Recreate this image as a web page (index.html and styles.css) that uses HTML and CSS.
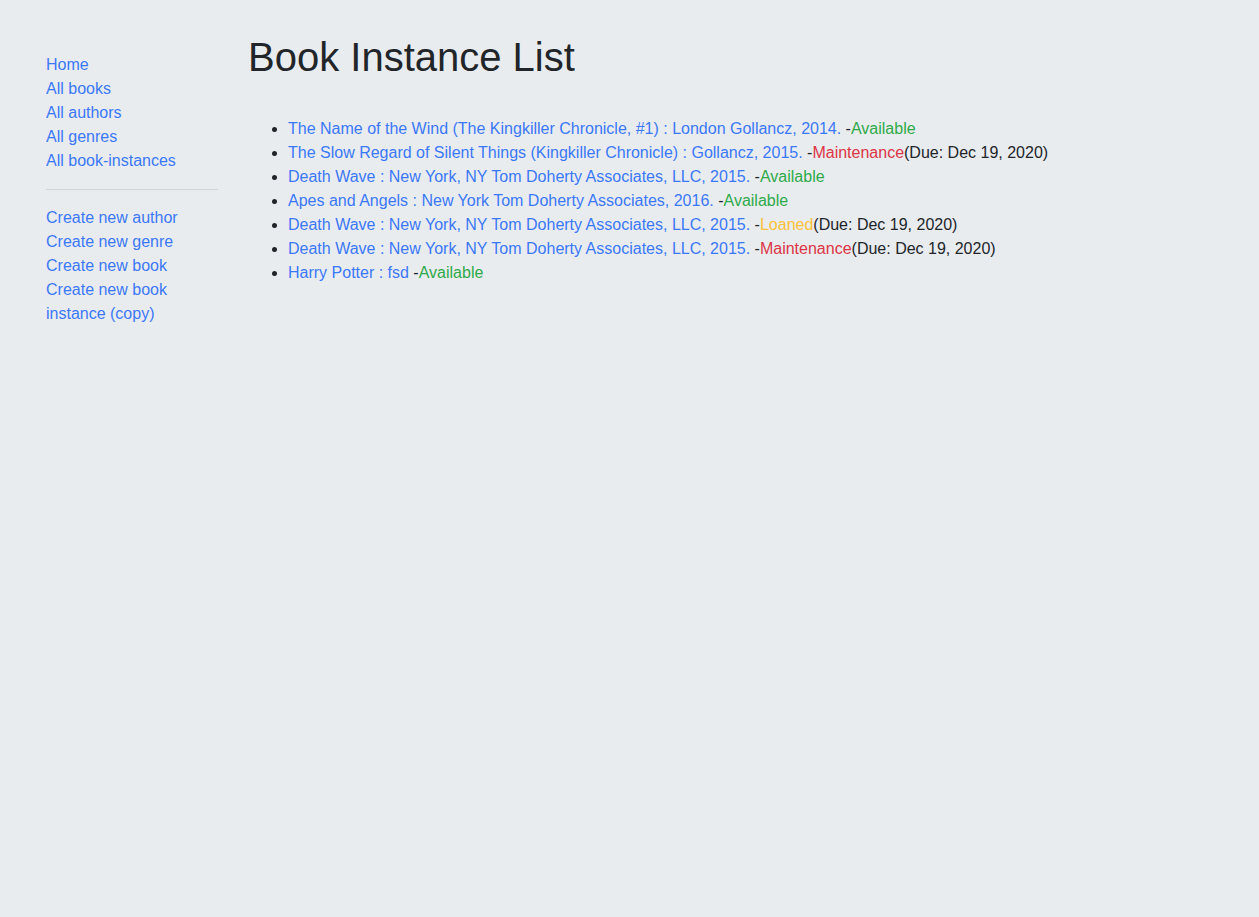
FILE: index.html
```html
<!DOCTYPE html>
<html lang="en">
<head>
<meta charset="utf-8">
<title>Local Library</title>
<link rel="stylesheet" href="styles.css">
</head>
<body>
<div class="page">
  <nav class="sidebar">
    <ul class="sidebar-nav">
      <li><a href="#">Home</a></li>
      <li><a href="#">All books</a></li>
      <li><a href="#">All authors</a></li>
      <li><a href="#">All genres</a></li>
      <li><a href="#">All book-instances</a></li>
      <li><hr class="divider"></li>
      <li><a href="#">Create new author</a></li>
      <li><a href="#">Create new genre</a></li>
      <li><a href="#">Create new book</a></li>
      <li><a href="#">Create new book instance (copy)</a></li>
    </ul>
  </nav>
  <main class="content">
    <h1 class="title">Book Instance List</h1>
    <ul class="instances">
      <li><a href="#">The Name of the Wind (The Kingkiller Chronicle, #1) : London Gollancz, 2014.</a> -<span class="st-available">Available</span></li>
      <li><a href="#">The Slow Regard of Silent Things (Kingkiller Chronicle) : Gollancz, 2015.</a> -<span class="st-maint">Maintenance</span><span class="due">(Due: Dec 19, 2020)</span></li>
      <li><a href="#">Death Wave : New York, NY Tom Doherty Associates, LLC, 2015.</a> -<span class="st-available">Available</span></li>
      <li><a href="#">Apes and Angels : New York Tom Doherty Associates, 2016.</a> -<span class="st-available">Available</span></li>
      <li><a href="#">Death Wave : New York, NY Tom Doherty Associates, LLC, 2015.</a> -<span class="st-loaned">Loaned</span><span class="due">(Due: Dec 19, 2020)</span></li>
      <li><a href="#">Death Wave : New York, NY Tom Doherty Associates, LLC, 2015.</a> -<span class="st-maint">Maintenance</span><span class="due">(Due: Dec 19, 2020)</span></li>
      <li><a href="#">Harry Potter : fsd</a> -<span class="st-available">Available</span></li>
    </ul>
  </main>
</div>
</body>
</html>
```
FILE: styles.css
```css
html, body {
  margin: 0;
  padding: 0;
}
body {
  background: #e9ecef;
  color: #212529;
  font-family: "Liberation Sans", Arial, Helvetica, sans-serif;
  font-size: 16px;
  line-height: 24px;
}
a {
  color: #3b78f7;
  text-decoration: none;
}
.page {
  display: flex;
  padding: 33px 16px 0 31px;
}
.sidebar {
  flex: 0 0 202px;
  box-sizing: border-box;
  padding: 0 15px;
}
.sidebar-nav {
  list-style: none;
  margin: 20px 0 0;
  padding: 0;
}
.divider {
  margin: 16px 0;
  border: 0;
  border-top: 1px solid rgba(0, 0, 0, 0.1);
  height: 0;
}
.content {
  flex: 1;
  padding: 0 15px;
}
.title {
  font-size: 40px;
  font-weight: 500;
  line-height: 48px;
  margin: 0 0 36px;
}
.instances {
  margin: 0;
  padding-left: 40px;
}
.st-available { color: #2eaa4a; }
.st-maint { color: #dc3545; }
.st-loaned { color: #fbc13a; }
.due { color: #212529; }
```
